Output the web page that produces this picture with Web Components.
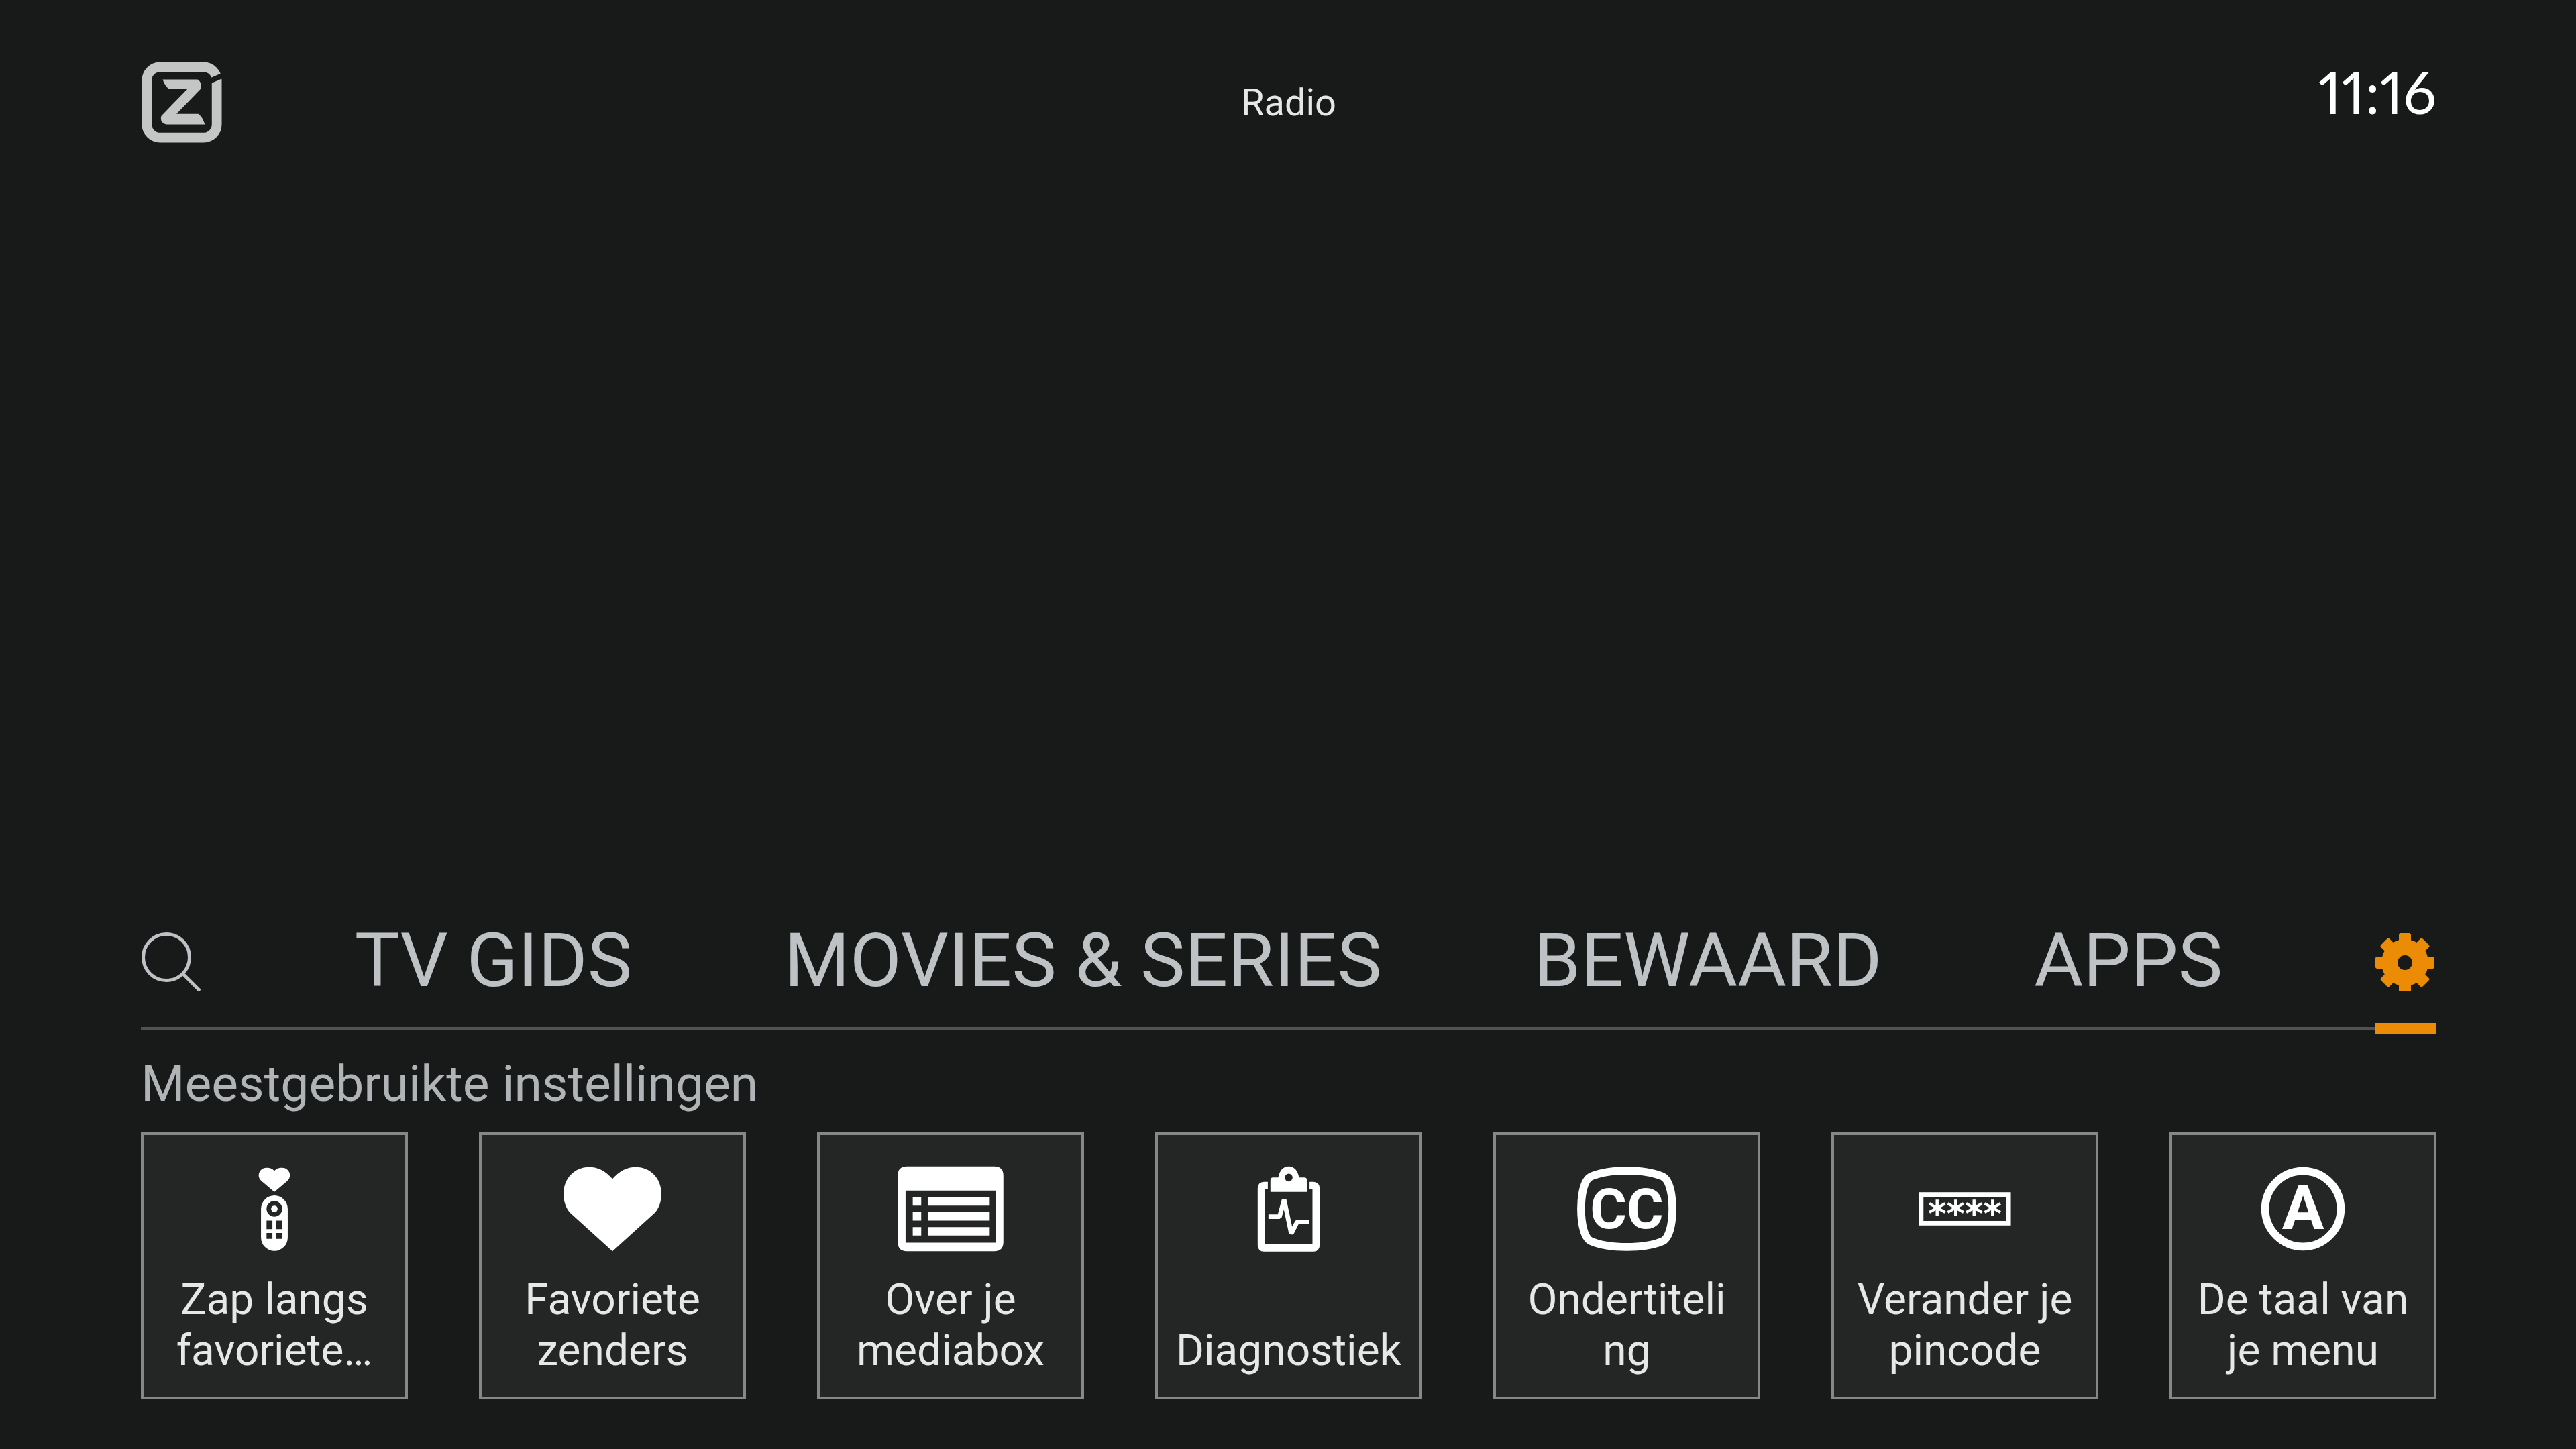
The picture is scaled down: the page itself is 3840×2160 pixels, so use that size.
<!DOCTYPE html>
<html lang="nl">
<head>
<meta charset="utf-8">
<meta name="viewport" content="width=device-width, initial-scale=1">
<title>Instellingen</title>
<style>
  :root {
    --screen-bg: #181a19;
    --tile-bg: #242625;
    --tile-border: #868887;
    --text: #e6e8e7;
    --text-nav: #bec2c4;
    --text-heading: #b0b4b6;
    --rule: #515253;
    --accent: #ec8c06;
  }

  body {
    margin: 0;
    background: var(--screen-bg);
    color: var(--text);
    font-family: Roboto, "Liberation Sans", sans-serif;
  }
</style>
</head>
<body>
<tv-screen>
  <tv-header slot="header" time="11:16">Radio</tv-header>
  <tv-nav slot="nav">
    <tv-nav-item label="Zoeken">
      <svg width="92" height="92" viewBox="0 -3 92 92" fill="none" stroke="currentColor" stroke-width="5" aria-hidden="true">
        <circle cx="38" cy="38" r="34.5"/>
        <path d="M62 62L88 88"/>
      </svg>
    </tv-nav-item>
    <tv-nav-item>TV GIDS</tv-nav-item>
    <tv-nav-item>MOVIES &amp; SERIES</tv-nav-item>
    <tv-nav-item>BEWAARD</tv-nav-item>
    <tv-nav-item>APPS</tv-nav-item>
    <tv-nav-item label="Instellingen" selected>
      <svg width="92" height="92" viewBox="-45 -49 92 92" aria-hidden="true">
        <g fill="currentColor">
          <rect x="-9" y="-44" width="18" height="88" rx="3"/>
          <rect x="-9" y="-44" width="18" height="88" rx="3" transform="rotate(45)"/>
          <rect x="-9" y="-44" width="18" height="88" rx="3" transform="rotate(90)"/>
          <rect x="-9" y="-44" width="18" height="88" rx="3" transform="rotate(135)"/>
          <circle r="35"/>
        </g>
        <circle r="11" fill="#181a19"/>
      </svg>
    </tv-nav-item>
  </tv-nav>
  <tv-shelf heading="Meestgebruikte instellingen">
    <tv-tile>
      <svg slot="icon" viewBox="-88 -72 176 144" fill="currentColor" aria-hidden="true">
        <path d="M0 -26L-20 -43C-28 -50 -23 -63 -12 -63C-7 -63 -3 -62 0 -58C3 -62 7 -63 12 -63C23 -63 28 -50 20 -43Z"/>
        <path fill-rule="evenodd" d="M-20.500 0A20.500 20.500 0 0 1 20.500 0V44A20.500 20.500 0 0 1 -20.500 44ZM-12 0A12 12 0 1 0 12 0A12 12 0 1 0 -12 0ZM-12 18V31H-3V18ZM3 18V31H12V18ZM-12 37V46H-3V37ZM3 37V46H12V37Z"/>
        <circle r="5"/>
      </svg>
      Zap langs favoriete…
    </tv-tile>
    <tv-tile>
      <svg slot="icon" viewBox="-88 -72 176 144" fill="currentColor" aria-hidden="true">
        <path d="M0 65L-64 7C-71 0 -75 -11 -75 -23C-75 -47 -58 -64 -36 -64C-22 -64 -11 -58 0 -46C11 -58 22 -64 36 -64C58 -64 75 -47 75 -23C75 -11 71 0 64 7Z"/>
      </svg>
      Favoriete zenders
    </tv-tile>
    <tv-tile>
      <svg slot="icon" viewBox="-88 -72 176 144" fill="currentColor" aria-hidden="true">
        <path fill-rule="evenodd" d="M-67 -65H67Q81 -65 81 -51V51Q81 65 67 65H-67Q-81 65 -81 51V-51Q-81 -65 -67 -65ZM-69 -28V52H69V-28Z"/>
        <path d="M-58 -18H-45V-5H-58ZM-35 -18H60V-5H-35ZM-58 5H-45V18H-58ZM-35 5H60V18H-35ZM-58 28H-45V41H-58ZM-35 28H60V41H-35Z"/>
      </svg>
      Over je mediabox
    </tv-tile>
    <tv-tile>
      <svg slot="icon" viewBox="-88 -72 176 144" fill="none" stroke="currentColor" aria-hidden="true">
        <path stroke-width="11" d="M-32 -36H-38Q-42 -36 -42 -32V56Q-42 60 -38 60H38Q42 60 42 56V-32Q42 -36 38 -36H32"/>
        <path fill="currentColor" stroke="none" fill-rule="evenodd" d="M-28 -26V-44Q-28 -48 -24 -48H-16C-14 -58 -9 -65 0 -65S14 -58 16 -48H24Q28 -48 28 -44V-26ZM-6 -48A6 6 0 1 0 6 -48A6 6 0 1 0 -6 -48Z"/>
        <path stroke-width="7" stroke-linejoin="bevel" d="M-31 12H-14L-7 -14L4 38L13 20H31"/>
      </svg>
      Diagnostiek
    </tv-tile>
    <tv-tile>
      <svg slot="icon" viewBox="-88 -72 176 144" aria-hidden="true">
        <path fill="none" stroke="currentColor" stroke-width="12" d="M0 -58.500C24 -58.500 42 -55 54 -50C65 -46 70 -24 70 0S65 46 54 50C42 55 24 58.500 0 58.500S-42 55 -54 50C-65 46 -70 24 -70 0S-65 -46 -54 -50C-42 -55 -24 -58.500 0 -58.500Z"/>
        <text y="30" fill="currentColor" font-size="86" font-weight="700" text-anchor="middle">CC</text>
      </svg>
      Ondertiteli<wbr>ng
    </tv-tile>
    <tv-tile>
      <svg slot="icon" viewBox="-88 -72 176 144" aria-hidden="true">
        <rect x="-67" y="-22" width="134" height="44" fill="none" stroke="currentColor" stroke-width="7"/>
        <text y="27" fill="currentColor" font-family="DejaVu Sans, sans-serif" font-size="54" font-weight="700" text-anchor="middle">****</text>
      </svg>
      Verander je pincode
    </tv-tile>
    <tv-tile>
      <svg slot="icon" viewBox="-88 -72 176 144" aria-hidden="true">
        <circle r="58" fill="none" stroke="currentColor" stroke-width="12"/>
        <text y="31" fill="currentColor" font-size="96" font-weight="700" text-anchor="middle">A</text>
      </svg>
      De taal van je menu
    </tv-tile>
  </tv-shelf>
</tv-screen>

<script>
  const screenTemplate = document.createElement("template");
  screenTemplate.innerHTML = `
    <style>
      :host {
        display: flex;
        flex-direction: column;
        box-sizing: border-box;
        min-height: 100vh;
        padding: 92px 208px 74px 210px;
      }
      main {
        margin-top: auto;
      }
    </style>
    <slot name="header"></slot>
    <main>
      <slot name="nav"></slot>
      <slot></slot>
    </main>
  `;

  class TvScreen extends HTMLElement {
    constructor() {
      super();
      this.attachShadow({ mode: "open" });
      this.shadowRoot.appendChild(screenTemplate.content.cloneNode(true));
    }
  }

  const headerTemplate = document.createElement("template");
  headerTemplate.innerHTML = `
    <style>
      :host {
        display: grid;
        grid-template-columns: 1fr auto 1fr;
        align-items: center;
      }
      svg {
        display: block;
      }
      h1 {
        margin: 0;
        font-size: 56px;
        font-weight: 400;
        line-height: 64px;
      }
      time {
        align-self: start;
        justify-self: end;
        color: #fff;
        font-family: Lato, sans-serif;
        font-size: 88px;
        font-variant-numeric: proportional-nums;
        line-height: 88px;
      }
    </style>
    <svg width="122" height="122" viewBox="0 0 124 124" role="img" aria-label="Ziggo">
      <rect x="9" y="8" width="106" height="107" rx="20" fill="none" stroke="#c4c6c5" stroke-width="15"/>
      <path d="M103 30L128 19" stroke="#181a19" stroke-width="8"/>
      <path fill="#c4c6c5" d="M33 27H86Q94 33 90 42L54 79H87Q93 83 97 95H38Q28 92 31 82L71 41H42Q36 36 33 27Z"/>
    </svg>
    <h1><slot></slot></h1>
    <time></time>
  `;

  class TvHeader extends HTMLElement {
    constructor() {
      super();
      this.attachShadow({ mode: "open" });
      this.shadowRoot.appendChild(headerTemplate.content.cloneNode(true));
      this.shadowRoot.querySelector("time").textContent = this.time;
    }

    get time() {
      return this.getAttribute("time") ?? "";
    }
  }

  const navTemplate = document.createElement("template");
  navTemplate.innerHTML = `
    <style>
      :host {
        display: block;
      }
      nav {
        display: flex;
        justify-content: space-between;
        border-bottom: 4px solid var(--rule);
      }
    </style>
    <nav><slot></slot></nav>
  `;

  class TvNav extends HTMLElement {
    constructor() {
      super();
      this.attachShadow({ mode: "open" });
      this.shadowRoot.appendChild(navTemplate.content.cloneNode(true));
    }
  }

  const navItemTemplate = document.createElement("template");
  navItemTemplate.innerHTML = `
    <style>
      :host {
        display: block;
        position: relative;
        color: var(--text-nav);
      }
      a {
        display: flex;
        align-items: center;
        height: 132px;
        padding-bottom: 33px;
        color: inherit;
        font-size: 112px;
        line-height: 132px;
        text-decoration: none;
        white-space: nowrap;
      }
      :host([selected]) {
        color: var(--accent);
      }
      /* marker lies over the rule below the menu */
      :host([selected])::after {
        content: "";
        position: absolute;
        right: 0;
        bottom: -10px;
        left: 0;
        height: 16px;
        background: var(--accent);
      }
    </style>
    <a href="#"><slot></slot></a>
  `;

  class TvNavItem extends HTMLElement {
    constructor() {
      super();
      this.attachShadow({ mode: "open" });
      this.shadowRoot.appendChild(navItemTemplate.content.cloneNode(true));

      const link = this.shadowRoot.querySelector("a");
      if (this.hasAttribute("label")) {
        link.setAttribute("aria-label", this.getAttribute("label"));
      }
      if (this.hasAttribute("selected")) {
        link.setAttribute("aria-current", "page");
      }
    }
  }

  const shelfTemplate = document.createElement("template");
  shelfTemplate.innerHTML = `
    <style>
      :host {
        display: block;
      }
      h2 {
        margin: 36px 0 29px;
        color: var(--text-heading);
        font-size: 75px;
        font-weight: 400;
        line-height: 88px;
      }
      .tiles {
        display: grid;
        grid-auto-flow: column;
        grid-auto-columns: minmax(0, 1fr);
        gap: 106px;
      }
    </style>
    <h2></h2>
    <div class="tiles"><slot></slot></div>
  `;

  class TvShelf extends HTMLElement {
    constructor() {
      super();
      this.attachShadow({ mode: "open" });
      this.shadowRoot.appendChild(shelfTemplate.content.cloneNode(true));
      this.shadowRoot.querySelector("h2").textContent = this.heading;
    }

    get heading() {
      return this.getAttribute("heading") ?? "";
    }
  }

  const tileTemplate = document.createElement("template");
  tileTemplate.innerHTML = `
    <style>
      :host {
        display: block;
      }
      button {
        display: flex;
        flex-direction: column;
        justify-content: space-between;
        align-items: center;
        box-sizing: border-box;
        width: 100%;
        aspect-ratio: 1;
        padding: 40px 24px 30px;
        border: 4px solid var(--tile-border);
        background: var(--tile-bg);
        color: var(--text);
        font: inherit;
        font-size: 64px;
        line-height: 76px;
        text-align: center;
      }
      ::slotted(svg) {
        display: block;
        width: 172px;
        height: 140px;
        color: #fff;
      }
    </style>
    <button type="button">
      <slot name="icon"></slot>
      <span><slot></slot></span>
    </button>
  `;

  class TvTile extends HTMLElement {
    constructor() {
      super();
      this.attachShadow({ mode: "open" });
      this.shadowRoot.appendChild(tileTemplate.content.cloneNode(true));
    }
  }

  customElements.define("tv-screen", TvScreen);
  customElements.define("tv-header", TvHeader);
  customElements.define("tv-nav", TvNav);
  customElements.define("tv-nav-item", TvNavItem);
  customElements.define("tv-shelf", TvShelf);
  customElements.define("tv-tile", TvTile);
</script>
</body>
</html>
